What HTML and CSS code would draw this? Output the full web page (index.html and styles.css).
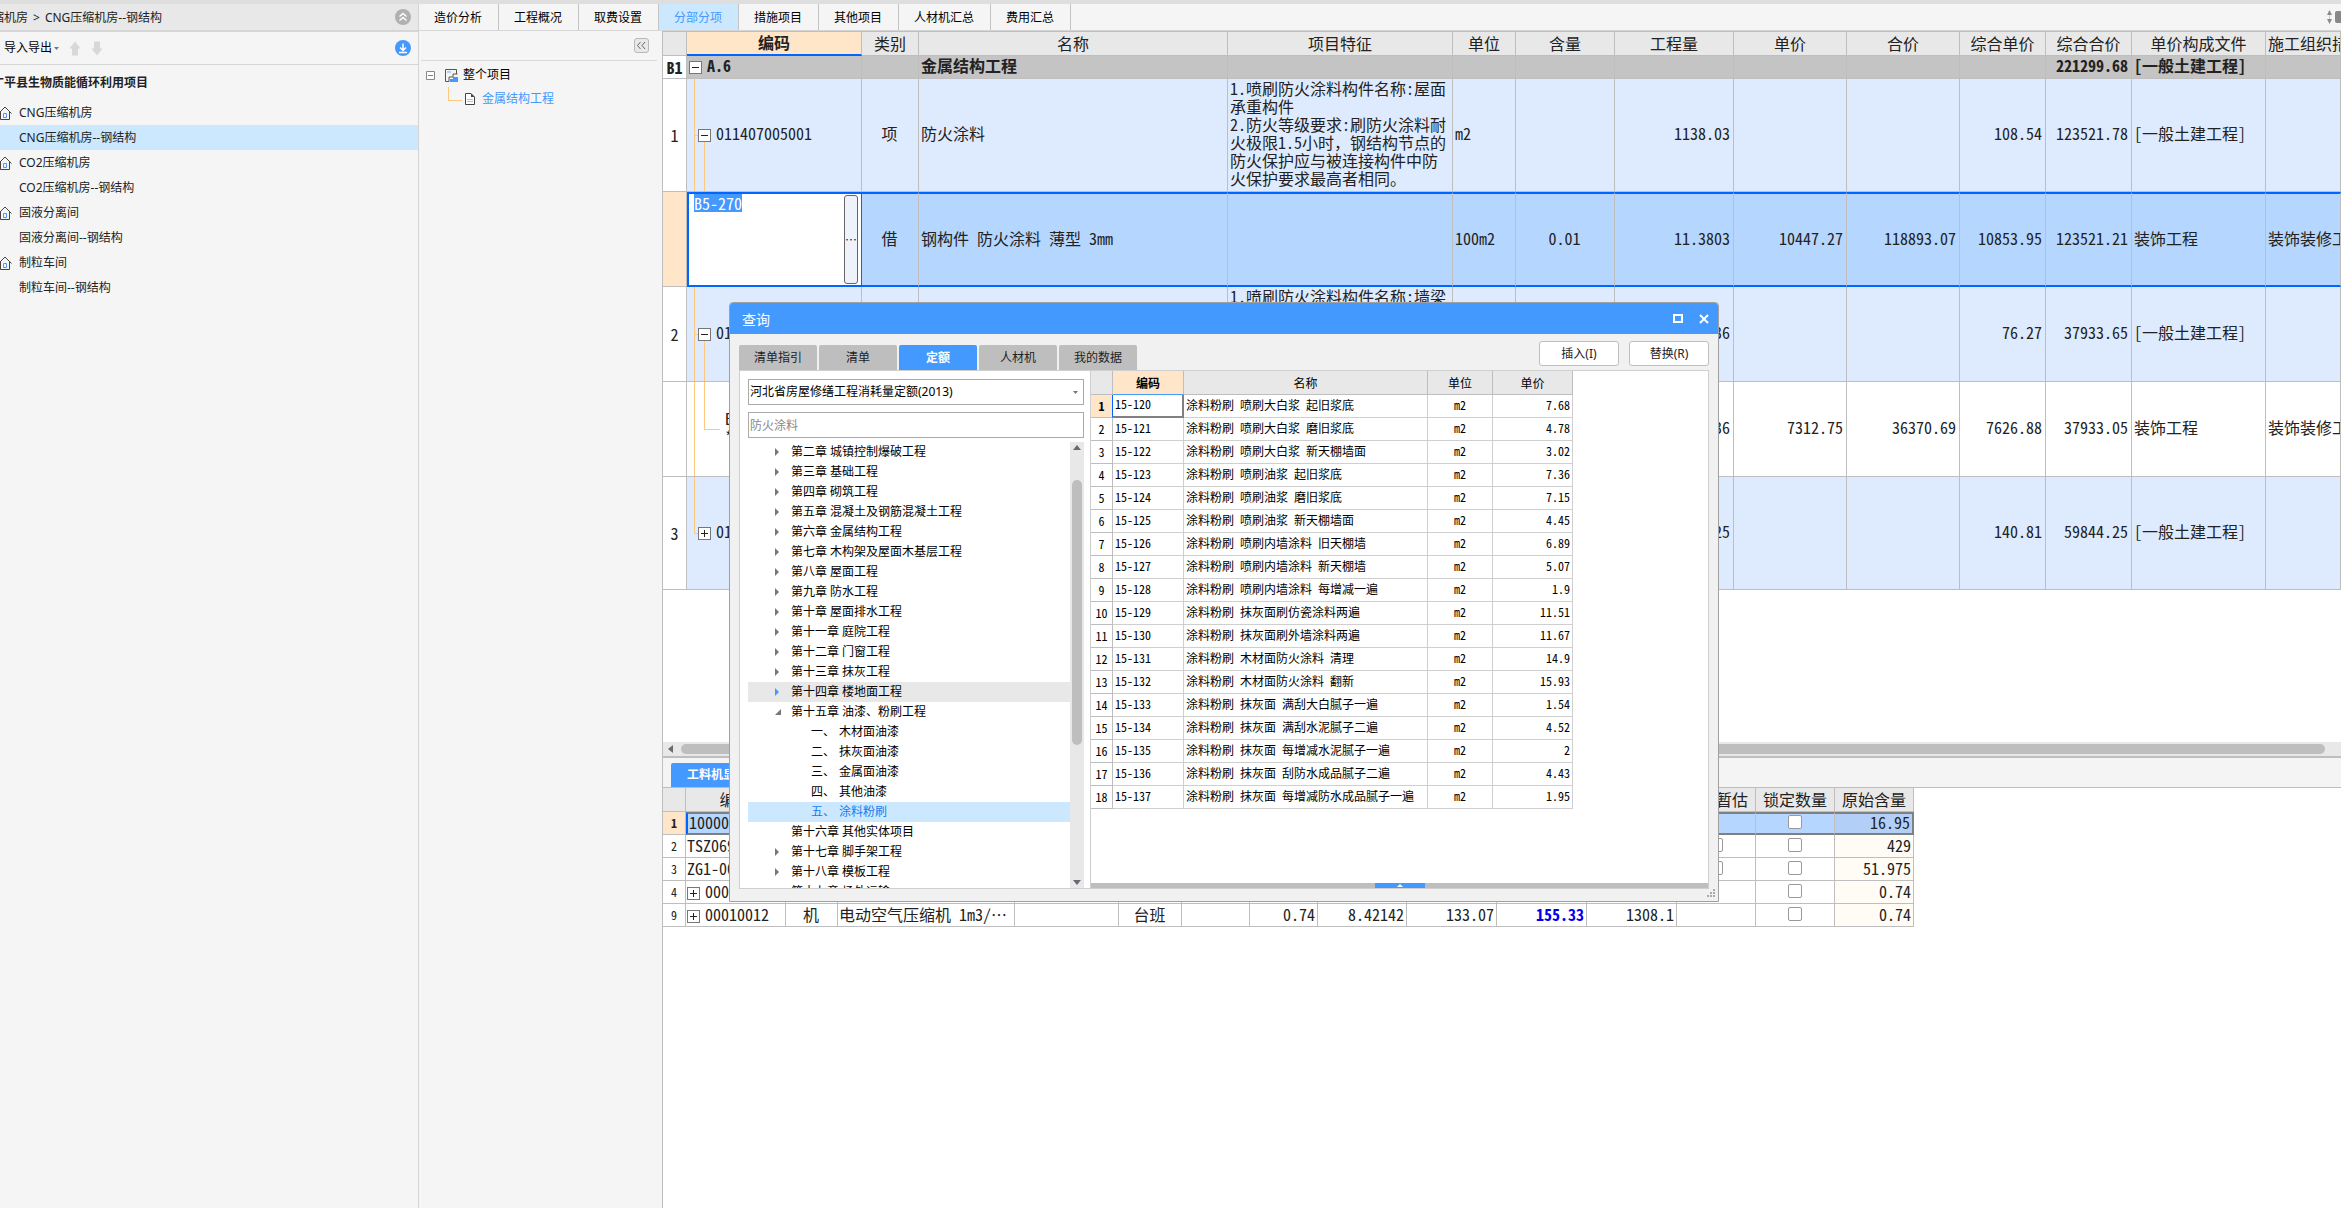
FILE: index.html
```html
<!DOCTYPE html>
<html lang="zh-CN">
<head>
<meta charset="utf-8">
<title>CNG压缩机房--钢结构</title>
<link rel="stylesheet" href="styles.css">
</head>
<body>
<svg class="defs" width="0" height="0" aria-hidden="true">
  <symbol id="home" viewBox="0 0 14 14"><path d="M.5 7.500 7 1l6.500 6.500M2.500 6v7.500h9V6" fill="none" stroke="#444"/><path d="M5.500 7.500h3v4h-3z" fill="none" stroke="#4499ff"/></symbol>
  <symbol id="up" viewBox="0 0 12 14"><path d="M6 0l5.500 7H9v7H3V7H.5z" fill="#d8d8d8"/></symbol>
</svg>
<div class="app">
  <aside class="sidebar">
    <header class="crumbs">
      <nav><a href="#">缩机房</a><span>&gt;</span><a href="#">CNG压缩机房--钢结构</a></nav>
      <button class="round" aria-label="收起"><svg width="16" height="16" viewBox="0 0 16 16"><circle cx="8" cy="8" r="8" fill="#b0b0b0"/><path d="M4.500 7.500 8 4.500l3.500 3M4.500 11.500 8 8.500l3.500 3" fill="none" stroke="#fff" stroke-width="1.500"/></svg></button>
    </header>
    <div class="tools">
      <button class="menu">导入导出<svg width="5" height="3"><path d="M0 0h5L2.500 3z" fill="#777"/></svg></button>
      <button class="arrow" aria-label="上移"><svg width="12" height="15"><use href="#up"/></svg></button>
      <button class="arrow down" aria-label="下移"><svg width="12" height="15"><use href="#up"/></svg></button>
      <button class="round" aria-label="下载"><svg width="16" height="16" viewBox="0 0 16 16"><circle cx="8" cy="8" r="8" fill="#4499ff"/><path d="M8 3.500v6.500M5 7.500l3 3 3-3M4 12.500h8" fill="none" stroke="#fff" stroke-width="1.500"/></svg></button>
    </div>
    <h1>广平县生物质能循环利用项目</h1>
    <ul class="projects">
      <li><svg width="14" height="14"><use href="#home"/></svg><a href="#">CNG压缩机房</a></li>
      <li class="current"><a href="#">CNG压缩机房--钢结构</a></li>
      <li><svg width="14" height="14"><use href="#home"/></svg><a href="#">CO2压缩机房</a></li>
      <li><a href="#">CO2压缩机房--钢结构</a></li>
      <li><svg width="14" height="14"><use href="#home"/></svg><a href="#">固液分离间</a></li>
      <li><a href="#">固液分离间--钢结构</a></li>
      <li><svg width="14" height="14"><use href="#home"/></svg><a href="#">制粒车间</a></li>
      <li><a href="#">制粒车间--钢结构</a></li>
    </ul>
  </aside>
  <div class="work">
    <nav class="tabs">
      <button>造价分析</button><button>工程概况</button><button>取费设置</button><button class="on">分部分项</button><button>措施项目</button><button>其他项目</button><button>人材机汇总</button><button>费用汇总</button>
      <svg class="sizer" width="14" height="14" viewBox="0 0 14 14"><path d="M0 5 2.500 0 5 5zM0 9h5l-2.500 5z" fill="#8a8a8a"/><path d="M2.500 5v4" stroke="#ccc"/><rect x="8" y="1" width="7" height="12" rx="2" fill="#888"/></svg>
    </nav>
    <div class="panes">
      <section class="outline">
        <div class="fold"><button aria-label="折叠"><svg width="13" height="13" viewBox="1 1 13 13"><path d="M6.500 4 3.500 7.500l3 3.500M11 4 8 7.500l3 3.500" fill="none" stroke="#666"/></svg></button></div>
        <ul>
          <li><svg width="9" height="9" viewBox="0 0 9 9"><path d="M.5.5h8v8h-8z" fill="#fff" stroke="#888"/><path d="M2 4.500h5" stroke="#2a9fc0"/></svg>
            <svg class="site" width="13" height="13" viewBox="0 0 13 13"><path d="M4 12.500H.5V.5h11V5M4 12.500V8h4V5h4.500" fill="none" stroke="#555"/><path d="M2 2h4v2H2z" fill="#a9d3ff"/><path d="M5 13v-3h3V8h5v5z" fill="#4499ff"/></svg>整个项目</li>
          <li class="leaf"><svg width="10" height="12" viewBox="0 0 10 12"><path d="M.5.5H6l3.500 3.500v7.500h-9z" fill="#fff" stroke="#444"/><path d="M6 .5V4h3.500z" fill="#444"/><path d="M2 6.500h6M2 8.500h6" stroke="#bbb"/></svg><a href="#">金属结构工程</a></li>
        </ul>
      </section>
      <main>
        <div class="main-grid">
        <table class="grid bill">
          <colgroup><col class="w24"><col class="w175"><col class="w57"><col class="w309"><col class="w225"><col class="w63"><col class="w99"><col class="w119"><col class="w113"><col class="w113"><col class="w86"><col class="w86"><col class="w134"><col></colgroup>
          <thead><tr><th></th><th class="picked">编码</th><th>类别</th><th>名称</th><th>项目特征</th><th>单位</th><th>含量</th><th>工程量</th><th>单价</th><th>合价</th><th>综合单价</th><th>综合合价</th><th>单价构成文件</th><th class="l">施工组织措施类别</th></tr></thead>
          <tbody>
            <tr class="group"><th>B1</th><td class="code"><button class="box minus" aria-label="折叠"></button>A.6</td><td></td><td>金属结构工程</td><td></td><td></td><td></td><td></td><td></td><td></td><td></td><td class="r">221299.68</td><td>[一般土建工程]</td><td></td></tr>
            <tr class="item tall"><th>1</th><td class="code deep open"><button class="box minus" aria-label="折叠"></button>011407005001</td><td class="c">项</td><td>防火涂料</td><td class="feature">1.喷刷防火涂料构件名称:屋面<br>承重构件<br>2.防火等级要求:刷防火涂料耐<br>火极限1.5小时，钢结构节点的<br>防火保护应与被连接构件中防<br>火保护要求最高者相同。</td><td>m2</td><td></td><td class="r">1138.03</td><td></td><td></td><td class="r">108.54</td><td class="r">123521.78</td><td>[一般土建工程]</td><td></td></tr>
            <tr class="editing"><th></th><td class="edit"><div><input aria-label="编码" value="B5-270"><button aria-label="选择">⋯</button></div></td><td class="c">借</td><td>钢构件 防火涂料 薄型 3mm</td><td></td><td>100m2</td><td class="c">0.01</td><td class="r">11.3803</td><td class="r">10447.27</td><td class="r">118893.07</td><td class="r">10853.95</td><td class="r">123521.21</td><td>装饰工程</td><td>装饰装修工程</td></tr>
            <tr class="item"><th>2</th><td class="code deep open"><button class="box minus" aria-label="折叠"></button>011407005002</td><td class="c"></td><td></td><td class="feature top">1.喷刷防火涂料构件名称:墙梁</td><td></td><td></td><td class="r">497.36</td><td></td><td></td><td class="r">76.27</td><td class="r">37933.65</td><td>[一般土建工程]</td><td></td></tr>
            <tr class="sub"><th></th><td class="code leafcode">B5-271<br>*1</td><td></td><td></td><td></td><td></td><td></td><td class="r">4.9736</td><td class="r">7312.75</td><td class="r">36370.69</td><td class="r">7626.88</td><td class="r">37933.05</td><td>装饰工程</td><td>装饰装修工程</td></tr>
            <tr class="item tall"><th>3</th><td class="code deep last"><button class="box plus" aria-label="展开"></button>011407005003</td><td></td><td></td><td></td><td></td><td></td><td class="r">425</td><td></td><td></td><td class="r">140.81</td><td class="r">59844.25</td><td>[一般土建工程]</td><td></td></tr>
          </tbody>
        </table>
        </div>
        <div class="hscroll"><svg width="5" height="8"><path d="M5 0v8L0 4z" fill="#666b73"/></svg><i></i></div>
        <div class="subtabs"><button>工料机显示</button></div>
        <table class="grid res">
          <colgroup><col class="w23"><col class="w100"><col class="w52"><col class="w177"><col class="w104"><col class="w63"><col class="w68"><col class="w68"><col class="w89"><col class="w90"><col class="w90"><col class="w90"><col class="w79"><col class="w79"><col class="w79"></colgroup>
          <thead><tr><th></th><th>编码</th><th>类别</th><th>名称</th><th></th><th></th><th></th><th></th><th></th><th></th><th></th><th></th><th>是否暂估</th><th>锁定数量</th><th>原始含量</th></tr></thead>
          <tbody>
            <tr class="sel"><th>1</th><td>10000001</td><td></td><td></td><td></td><td></td><td></td><td></td><td></td><td></td><td></td><td></td><td></td><td class="c"><input type="checkbox" aria-label="锁定数量"></td><td class="r">16.95</td></tr>
            <tr><th>2</th><td>TSZ069</td><td></td><td></td><td></td><td></td><td></td><td></td><td></td><td></td><td></td><td></td><td class="c"><input type="checkbox" aria-label="是否暂估"></td><td class="c"><input type="checkbox" aria-label="锁定数量"></td><td class="r">429</td></tr>
            <tr><th>3</th><td>ZG1-001</td><td></td><td></td><td></td><td></td><td></td><td></td><td></td><td></td><td></td><td></td><td class="c"><input type="checkbox" aria-label="是否暂估"></td><td class="c"><input type="checkbox" aria-label="锁定数量"></td><td class="r">51.975</td></tr>
            <tr><th>4</th><td><button class="box plus" aria-label="展开"></button>00010001</td><td></td><td></td><td></td><td></td><td></td><td></td><td></td><td></td><td></td><td></td><td></td><td class="c"><input type="checkbox" aria-label="锁定数量"></td><td class="r">0.74</td></tr>
            <tr><th>9</th><td><button class="box plus" aria-label="展开"></button>00010012</td><td class="c">机</td><td>电动空气压缩机 1m3/⋯</td><td></td><td class="c">台班</td><td></td><td class="r">0.74</td><td class="r">8.42142</td><td class="r">133.07</td><td class="r changed">155.33</td><td class="r">1308.1</td><td></td><td class="c"><input type="checkbox" aria-label="锁定数量"></td><td class="r">0.74</td></tr>
          </tbody>
        </table>
      </main>
    </div>
  </div>
</div>

<div class="dialog" role="dialog" aria-labelledby="dlg-title">
  <header>
    <h2 id="dlg-title">查询</h2>
    <button aria-label="最大化"><svg width="10" height="9"><path d="M1 1h8v7H1z" fill="none" stroke="#fff" stroke-width="2"/></svg></button>
    <button aria-label="关闭"><svg width="10" height="10"><path d="M1 1l8 8M9 1 1 9" stroke="#fff" stroke-width="2"/></svg></button>
  </header>
  <div class="bar">
    <nav><button>清单指引</button><button>清单</button><button class="on">定额</button><button>人材机</button><button>我的数据</button></nav>
    <button class="act">插入(I)</button><button class="act">替换(R)</button>
  </div>
  <div class="body">
    <div class="picker">
      <div class="field"><select aria-label="定额库"><option>河北省房屋修缮工程消耗量定额(2013)</option></select><svg width="5" height="3"><path d="M0 0h5L2.500 3z" fill="#777"/></svg></div>
      <input class="search" aria-label="搜索" placeholder="防火涂料">
      <div class="treebox">
        <ul class="tree">
          <li class="has">第二章 城镇控制爆破工程</li>
          <li class="has">第三章 基础工程</li>
          <li class="has">第四章 砌筑工程</li>
          <li class="has">第五章 混凝土及钢筋混凝土工程</li>
          <li class="has">第六章 金属结构工程</li>
          <li class="has">第七章 木构架及屋面木基层工程</li>
          <li class="has">第八章 屋面工程</li>
          <li class="has">第九章 防水工程</li>
          <li class="has">第十章 屋面排水工程</li>
          <li class="has">第十一章 庭院工程</li>
          <li class="has">第十二章 门窗工程</li>
          <li class="has">第十三章 抹灰工程</li>
          <li class="has hover">第十四章 楼地面工程</li>
          <li class="opened">第十五章 油漆、粉刷工程</li>
          <li class="child"><span>一、</span>木材面油漆</li>
          <li class="child"><span>二、</span>抹灰面油漆</li>
          <li class="child"><span>三、</span>金属面油漆</li>
          <li class="child"><span>四、</span>其他油漆</li>
          <li class="child current"><span>五、</span>涂料粉刷</li>
          <li>第十六章 其他实体项目</li>
          <li class="has">第十七章 脚手架工程</li>
          <li class="has">第十八章 模板工程</li>
          <li class="has">第十九章 场外运输</li>
        </ul>
        <div class="vscroll"><svg width="8" height="5"><path d="M0 5h8L4 0z" fill="#666b73"/></svg><i></i><svg width="8" height="5"><path d="M0 0h8L4 5z" fill="#666b73"/></svg></div>
      </div>
    </div>
    <div class="result">
      <table class="grid quota">
        <colgroup><col class="w22"><col class="w71"><col class="w244"><col class="w65"><col class="w80"></colgroup>
        <thead><tr><th></th><th class="picked">编码</th><th>名称</th><th>单位</th><th>单价</th></tr></thead>
        <tbody>
          <tr class="first"><th>1</th><td>15-120</td><td>涂料粉刷 喷刷大白浆 起旧浆底</td><td>m2</td><td>7.68</td></tr>
          <tr><th>2</th><td>15-121</td><td>涂料粉刷 喷刷大白浆 磨旧浆底</td><td>m2</td><td>4.78</td></tr>
          <tr><th>3</th><td>15-122</td><td>涂料粉刷 喷刷大白浆 新天棚墙面</td><td>m2</td><td>3.02</td></tr>
          <tr><th>4</th><td>15-123</td><td>涂料粉刷 喷刷油浆 起旧浆底</td><td>m2</td><td>7.36</td></tr>
          <tr><th>5</th><td>15-124</td><td>涂料粉刷 喷刷油浆 磨旧浆底</td><td>m2</td><td>7.15</td></tr>
          <tr><th>6</th><td>15-125</td><td>涂料粉刷 喷刷油浆 新天棚墙面</td><td>m2</td><td>4.45</td></tr>
          <tr><th>7</th><td>15-126</td><td>涂料粉刷 喷刷内墙涂料 旧天棚墙</td><td>m2</td><td>6.89</td></tr>
          <tr><th>8</th><td>15-127</td><td>涂料粉刷 喷刷内墙涂料 新天棚墙</td><td>m2</td><td>5.07</td></tr>
          <tr><th>9</th><td>15-128</td><td>涂料粉刷 喷刷内墙涂料 每增减一遍</td><td>m2</td><td>1.9</td></tr>
          <tr><th>10</th><td>15-129</td><td>涂料粉刷 抹灰面刷仿瓷涂料两遍</td><td>m2</td><td>11.51</td></tr>
          <tr><th>11</th><td>15-130</td><td>涂料粉刷 抹灰面刷外墙涂料两遍</td><td>m2</td><td>11.67</td></tr>
          <tr><th>12</th><td>15-131</td><td>涂料粉刷 木材面防火涂料 清理</td><td>m2</td><td>14.9</td></tr>
          <tr><th>13</th><td>15-132</td><td>涂料粉刷 木材面防火涂料 翻新</td><td>m2</td><td>15.93</td></tr>
          <tr><th>14</th><td>15-133</td><td>涂料粉刷 抹灰面 满刮大白腻子一遍</td><td>m2</td><td>1.54</td></tr>
          <tr><th>15</th><td>15-134</td><td>涂料粉刷 抹灰面 满刮水泥腻子二遍</td><td>m2</td><td>4.52</td></tr>
          <tr><th>16</th><td>15-135</td><td>涂料粉刷 抹灰面 每增减水泥腻子一遍</td><td>m2</td><td>2</td></tr>
          <tr><th>17</th><td>15-136</td><td>涂料粉刷 抹灰面 刮防水成品腻子二遍</td><td>m2</td><td>4.43</td></tr>
          <tr><th>18</th><td>15-137</td><td>涂料粉刷 抹灰面 每增减防水成品腻子一遍</td><td>m2</td><td>1.95</td></tr>
        </tbody>
      </table>
      <div class="drawer"><button aria-label="展开"><svg width="6" height="3"><path d="M0 3h6L3 0z" fill="#fff"/></svg></button></div>
    </div>
  </div>
  <svg class="grip" width="8" height="8"><path d="M6 0h2v2H6zM6 3h2v2H6zM6 6h2v2H6zM3 3h2v2H3zM3 6h2v2H3zM0 6h2v2H0z" fill="#aaa"/></svg>
</div>
</body>
</html>
```
FILE: styles.css
```css
* { box-sizing: border-box; }
body {
  margin: 0;
  height: 100vh;
  overflow: hidden;
  background: #fff;
  color: #222;
  font: 12px/18px "Noto Sans", "Noto Sans CJK SC", sans-serif;
}
ul { list-style: none; margin: 0; padding: 0; }
a { color: inherit; text-decoration: none; }
button, input, select { font: inherit; color: inherit; border: 0; padding: 0; margin: 0; background: none; }
svg { display: block; flex: none; }
.defs { position: absolute; }

.app { display: flex; height: 100vh; border-top: 4px solid #dedede; }

/* project sidebar */
.sidebar { flex: none; width: 419px; background: #f5f5f5; border-right: 1px solid #d4d4d4; overflow: hidden; }
.crumbs { display: flex; align-items: center; justify-content: space-between; height: 28px; padding-right: 7px; background: #e8e8e8; border-bottom: 2px solid #d6d6d6; }
.crumbs nav { display: flex; gap: 5px; margin-left: -8px; padding-top: 2px; }
.tools { display: flex; align-items: center; gap: 10px; height: 33px; padding: 0 7px 0 4px; border-bottom: 1px solid #d6d6d6; }
.menu { display: flex; align-items: center; gap: 2px; color: #000; }
.down svg { transform: rotate(180deg); }
.tools .round { margin-left: auto; }
.sidebar h1 { margin: 0 0 0 -8px; font-size: 12px; line-height: 35px; }
.projects li { display: flex; align-items: center; gap: 7px; height: 25px; padding-left: 19px; }
.projects svg { margin-left: -21px; }

/* module tabs */
.work { flex: 1; min-width: 0; display: flex; flex-direction: column; }
.tabs { display: flex; align-items: center; height: 27px; background: #f5f5f5; border-bottom: 1px solid #d6d6d6; color: #000; }
.tabs button { height: 26px; padding: 2px 16px 0 15px; border-right: 1px solid #c4c4c4; }
.tabs .on { background: #cce8ff; color: #4499ff; }
.sizer { margin-left: auto; }

.panes { flex: 1; min-height: 0; display: flex; }
.outline { flex: none; width: 244px; padding: 0 5px 0 2px; background: #f5f5f5; border-right: 1px solid #bebebe; color: #000; }
.fold { display: flex; justify-content: flex-end; padding: 7px 8px; border-bottom: 1px solid #d9d9d9; }
.fold button { background: #e8e8e8; border: 1px solid #b8b8b8; border-radius: 3px; }
.outline ul { padding: 2px 0 0 5px; }
.outline li { display: flex; align-items: center; height: 24px; }
.site { margin: 0 5px 0 10px; }
.outline .leaf { padding-left: 22px; gap: 7px; color: #4499ff; }
.leaf::before { content: ""; align-self: flex-start; width: 13px; height: 13px; border: solid #ffc87f; border-width: 0 0 1px 1px; margin-right: -4px; }

main { flex: 1; min-width: 0; overflow: hidden; }
.main-grid { height: 711px; }

/* data grids */
.grid { table-layout: fixed; border-collapse: separate; border-spacing: 0; font-family: "Noto Sans Mono CJK SC", "Liberation Serif", "Noto Sans CJK SC", monospace; font-size: 16px; }
.grid th, .grid td { padding: 0 3px 2px; border: solid #bebebe; border-width: 0 1px 1px 0; white-space: nowrap; overflow: hidden; font-weight: 400; text-align: left; line-height: 18px; }
.grid thead th { height: 24px; padding: 0 0 2px; background: #e8e8e8; text-align: center; }
.grid tbody th { padding: 0; background: #fff; text-align: center; }
.grid .picked { background: #ffe6c8; font-weight: 700; }
.grid .l { text-align: left; padding-left: 2px; }
.grid .c { text-align: center; }
.grid .r { text-align: right; }

.bill { width: 100%; }
.bill thead th { height: 25px; border-top: 1px solid #bebebe; }
.bill .picked { border-bottom: 2px solid #0066ff; }
.bill tbody tr { height: 95px; }
.bill tbody td { padding: 0 3px 4px 2px; }
.bill tbody .tall { height: 113px; }
.bill tbody .group { height: 23px; }
.bill .group td { background: #c4c4c4; font-weight: 700; }
.bill .group th { font-weight: 700; }
.bill .item td { background-color: #deebff; }
.bill .editing td { background: #b5d6ff; border-top: 2px solid #0066ff; border-bottom: 2px solid #0066ff; }
.bill .editing th { background: #ffe6c8; }
.bill .top { vertical-align: top; }
.bill tbody .feature { padding-right: 0; }
.bill .editing .edit { padding: 0; background: #fff; border-left: 2px solid #0066ff; border-right-color: #0066ff; }
.edit div { display: flex; justify-content: space-between; align-items: flex-start; height: 91px; padding: 0 3px 0 5px; }
.edit input { width: 48px; height: 18px; background: #4499ff; color: #fff; }
.edit button { width: 14px; height: 89px; margin-top: 1px; background: #eef2fa; border: 1px solid #666; border-radius: 3px; font-size: 12px; }

.code { background-repeat: no-repeat; }
.bill tbody .deep { padding-left: 11px; }
.bill .open {
  background-image: linear-gradient(#ffc87f, #ffc87f), linear-gradient(#ffc87f, #ffc87f), linear-gradient(#ffc87f, #ffc87f);
  background-size: 1px 100%, 1px 50%, 5px 1px;
  background-position: 7px 0, 17px 100%, 7px 50%;
}
.bill tbody .leafcode {
  padding-left: 38px;
  background-image: linear-gradient(#ffc87f, #ffc87f), linear-gradient(#ffc87f, #ffc87f), linear-gradient(#ffc87f, #ffc87f);
  background-size: 1px 100%, 1px 50%, 16px 1px;
  background-position: 7px 0, 17px 0, 17px 50%;
}
.bill .last {
  background-image: linear-gradient(#ffc87f, #ffc87f), linear-gradient(#ffc87f, #ffc87f);
  background-size: 1px 50%, 5px 1px;
  background-position: 7px 0, 7px 50%;
}
.box { display: inline-block; width: 13px; height: 13px; margin-right: 5px; vertical-align: -1px; border: 1px solid #777; background: linear-gradient(#222, #222) center / 7px 1px no-repeat #fff; }
.plus { background: linear-gradient(#222, #222) center / 7px 1px no-repeat, linear-gradient(#222, #222) center / 1px 7px no-repeat #fff; }

.hscroll { display: flex; align-items: center; gap: 8px; height: 14px; padding: 0 16px 0 5px; background: #e8e8e8; }
.hscroll i { flex: 1; height: 10px; border-radius: 5px; background: #bebebe; }
.subtabs { display: flex; align-items: flex-end; height: 32px; padding-left: 8px; background: #f4f4f4; border-top: 2px solid #bebebe; border-bottom: 1px solid #bebebe; }
.subtabs button { width: 92px; height: 24px; background: #4499ff; color: #fff; font-weight: 700; border-radius: 2px 2px 0 0; }

.res { width: 1251px; }
.res tbody td, .res tbody th { height: 23px; }
.res tbody th { font-size: 12px; }
.res td { padding: 0 2px 3px 1px; }
.res td:last-child { background: #fffbf5; }
.res .changed { font-weight: 700; color: #0000ee; }
.res .sel td { background: #b5d6ff; border-top: 2px solid #808080; border-bottom: 2px solid #808080; line-height: 16px; }
.res .sel td:nth-child(2) { border-left: 2px solid #0066ff; }
.res .sel td:last-child { background: #b2d0f7; border-right: 2px solid #808080; }
.res .sel th { background: #ffe6c8; font-weight: 700; }
.res input { display: block; appearance: none; width: 14px; height: 14px; margin: 0 auto; border: 1px solid #999; border-radius: 2px; background: #fff; }

.w22 { width: 22px; } .w23 { width: 23px; } .w24 { width: 24px; } .w52 { width: 52px; } .w57 { width: 57px; }
.w63 { width: 63px; } .w65 { width: 65px; } .w68 { width: 68px; } .w71 { width: 71px; }
.w79 { width: 79px; } .w80 { width: 80px; } .w86 { width: 86px; } .w89 { width: 89px; }
.w90 { width: 90px; } .w99 { width: 99px; } .w100 { width: 100px; } .w104 { width: 104px; }
.w113 { width: 113px; } .w119 { width: 119px; } .w134 { width: 134px; } .w175 { width: 175px; }
.w177 { width: 177px; } .w225 { width: 225px; } .w244 { width: 244px; } .w309 { width: 309px; }

/* floating query dialog */
.dialog { position: absolute; left: 729px; top: 302px; width: 990px; height: 600px; display: flex; flex-direction: column; background: #f1f1f1; border: 1px solid #a0a0a0; border-radius: 4px 4px 0 0; }
.dialog header { display: flex; align-items: center; gap: 16px; height: 31px; padding: 0 9px 0 12px; background: #4499ff; color: #fff; border-radius: 3px 3px 0 0; }
.dialog h2 { flex: 1; margin: 0; padding-top: 2px; font-size: 14px; font-weight: 400; }
.bar { display: flex; align-items: flex-start; gap: 10px; height: 36px; padding: 7px 9px 0; }
.bar nav { flex: 1; display: flex; gap: 2px; padding-top: 4px; }
.bar nav button { width: 78px; height: 25px; background: #bebebe; border-radius: 2px 2px 0 0; }
.bar nav .on { background: #4499ff; color: #fff; font-weight: 700; }
.act { width: 80px; height: 25px; background: #fff; border: 1px solid #bebebe; border-radius: 3px; }
.body { flex: 1; min-height: 0; display: flex; margin: 0 9px 12px; background: #fff; border: 1px solid #cfcfcf; color: #000; }
.picker { flex: none; width: 351px; display: flex; flex-direction: column; gap: 7px; padding: 8px 6px 0 8px; border-right: 1px solid #cfcfcf; }
.field { display: flex; align-items: center; height: 26px; border: 1px solid #aaa; padding: 0 5px 0 1px; }
.field select { flex: 1; appearance: none; }
.search { height: 26px; border: 1px solid #aaa; padding: 0 1px; }
.search::placeholder { color: #888; opacity: 1; }
.treebox { flex: 1; min-height: 0; display: flex; margin-top: -3px; }
.tree { flex: 1; overflow: hidden; }
.tree li { display: flex; align-items: center; height: 20px; padding-left: 43px; white-space: pre; }
.tree .has::before { content: ""; margin: 0 12px 0 -16px; border: solid transparent; border-width: 4px 0 4px 4px; border-left-color: #777; }
.tree .hover { background: #e8e8e8; }
.tree .hover::before { border-left-color: #4499ff; }
.tree .opened::before { content: ""; margin: 0 10px 0 -16px; border: solid transparent; border-width: 0 0 6px 6px; border-bottom-color: #777; }
.tree .child { padding-left: 63px; gap: 4px; }
.tree .current { color: #1a7aef; }
.vscroll { width: 14px; display: flex; flex-direction: column; align-items: center; padding: 3px 0; background: #e8e8e8; }
.vscroll i { flex: none; width: 10px; height: 265px; margin: 30px 0 auto; border-radius: 5px; background: #bebebe; }
.current { background: #cce8ff; }

.result { flex: 1; display: flex; flex-direction: column; justify-content: space-between; align-items: flex-start; }
.quota { width: 482px; font-size: 12px; }
.quota td { padding: 0 2px 3px; border-color: #cfcfcf; }
.grid.quota thead th { padding: 0; }
.quota tbody td, .quota tbody th { height: 23px; }
.quota td:nth-child(4) { text-align: center; }
.quota td:nth-child(5) { text-align: right; }
.quota .first th { background: #ffe6c8; font-weight: 700; border-right: 1px solid #0066ff; }
.quota .first td:nth-child(2) { border-right: 2px solid #808080; border-bottom: 2px solid #808080; }
.quota .picked { border-bottom-color: #4499ff; }
.drawer { align-self: stretch; display: flex; justify-content: center; height: 5px; background: #bebebe; }
.drawer button { width: 50px; display: flex; justify-content: center; align-items: center; background: #4499ff; }
.grip { position: absolute; right: 3px; bottom: 4px; }
```
